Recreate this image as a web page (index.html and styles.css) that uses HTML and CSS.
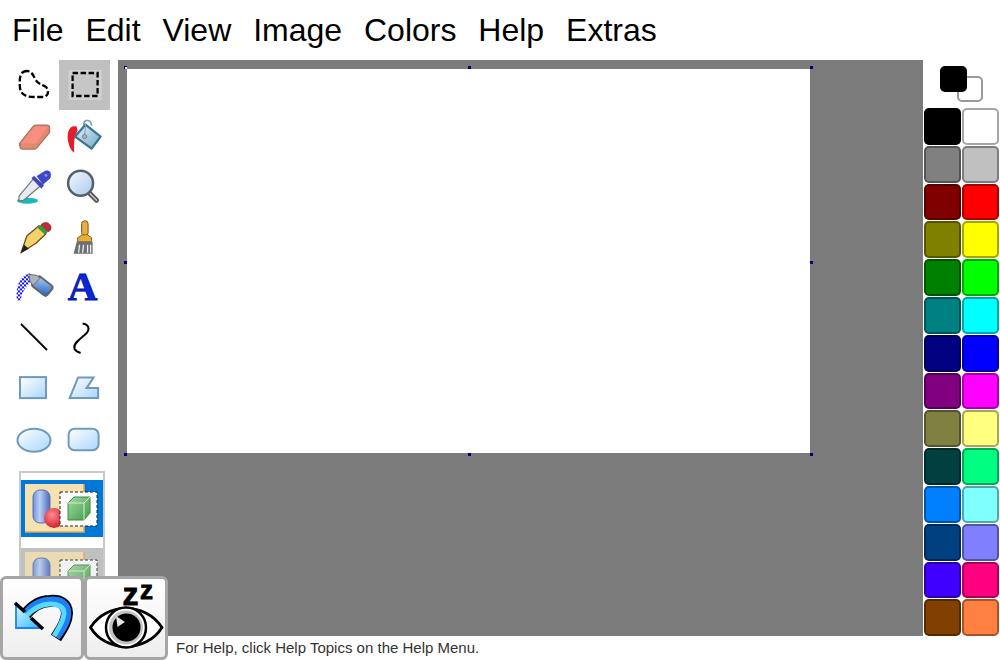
FILE: index.html
```html
<!DOCTYPE html>
<html lang="en">
<head>
    <meta charset="UTF-8">
    <title>Paint</title>
    <link rel="stylesheet" href="styles.css">
</head>
<body>
    <svg class="defs" width="0" height="0">
        <defs>
            <linearGradient id="shape" x1="0" y1="0" x2="1" y2="1">
                <stop offset="0" stop-color="#ffffff"/>
                <stop offset="1" stop-color="#a9d6fb"/>
            </linearGradient>
            <linearGradient id="glass" x1="0" y1="0" x2="1" y2="1">
                <stop offset="0" stop-color="#f4faff"/>
                <stop offset="1" stop-color="#a8c8ec"/>
            </linearGradient>
            <linearGradient id="bucket" x1="0" y1="0" x2="1" y2="1">
                <stop offset="0" stop-color="#e8f3fa"/>
                <stop offset="1" stop-color="#6ea8c8"/>
            </linearGradient>
            <linearGradient id="can" x1="0" y1="0" x2="1" y2="1">
                <stop offset="0" stop-color="#b4d2f4"/>
                <stop offset="1" stop-color="#1f5cc0"/>
            </linearGradient>
            <linearGradient id="undo" x1="0" y1="0" x2="1" y2="1">
                <stop offset="0" stop-color="#d4f8ff"/>
                <stop offset="1" stop-color="#30b8ff"/>
            </linearGradient>
            <linearGradient id="cyl" x1="0" y1="0" x2="1" y2="0">
                <stop offset="0" stop-color="#6f90dc"/>
                <stop offset="0.4" stop-color="#bccff4"/>
                <stop offset="1" stop-color="#4a68bc"/>
            </linearGradient>
            <linearGradient id="cube" x1="0" y1="0" x2="1" y2="1">
                <stop offset="0" stop-color="#a4dca0"/>
                <stop offset="1" stop-color="#3f9a48"/>
            </linearGradient>
            <radialGradient id="ball" cx="0.4" cy="0.35" r="0.7">
                <stop offset="0" stop-color="#ff8c90"/>
                <stop offset="1" stop-color="#d01828"/>
            </radialGradient>
            <pattern id="dots" width="4" height="4" patternUnits="userSpaceOnUse">
                <rect width="2" height="2" fill="#1010f0"/>
                <rect x="2" y="2" width="2" height="2" fill="#1010f0"/>
            </pattern>
            <symbol id="optIcon" viewBox="21 480 82 57">
                <path d="M25 484 L84 484 L84 532 L25 532 Z" fill="#f6e2b0"/>
                <path d="M84 484 L84 532 L25 532" fill="none" stroke="#e8a848" stroke-width="1.500"/>
                <rect x="33" y="490" width="17" height="33" rx="7" fill="url(#cyl)" stroke="#5570b0"/>
                <circle cx="54" cy="518" r="10" fill="url(#ball)"/>
                <rect x="60" y="492" width="37" height="34" fill="#ffffff" stroke="#222" stroke-dasharray="3 2"/>
                <path d="M68 503 L74 497 L90 497 L90 513 L84 520 L68 520 Z" fill="url(#cube)" stroke="#3c8a44"/>
                <path d="M68 503 L84 503 L90 497 M84 503 L84 520" fill="none" stroke="#d6f0d0"/>
            </symbol>
        </defs>
    </svg>

    <nav class="menubar">
        <span class="menu-item">File</span>
        <span class="menu-item">Edit</span>
        <span class="menu-item">View</span>
        <span class="menu-item">Image</span>
        <span class="menu-item">Colors</span>
        <span class="menu-item">Help</span>
        <span class="menu-item">Extras</span>
    </nav>

    <div class="workspace">
        <aside class="toolbox">
            <div class="tools">
                <button class="tool">
                    <svg viewBox="9 60 50.400 50.400"><path d="M27 71 C20 71 19 78 20 88 C21 96 28 97 35 97 L44 97 C49 95 49 90 46 87 C41 84 38 84 35 79 C33 74 31 71 27 71 Z" fill="none" stroke="#000" stroke-width="2.300" stroke-dasharray="6 2.500"/></svg>
                </button>
                <button class="tool selected">
                    <svg viewBox="59.400 60 50.400 50.400"><rect x="69" y="70" width="33" height="30" fill="#d0d0d0"/><rect x="73" y="73" width="25" height="23" fill="#c6c6c6" stroke="#000" stroke-width="2.300" stroke-dasharray="5.500 2.500"/></svg>
                </button>
                <button class="tool">
                    <svg viewBox="9 110.400 50.400 50.400"><path d="M19.500 144 L33 127 Q34 125.500 36 125.500 L47 125.500 Q49.500 125.500 49.500 128 L49.500 133 L37 148 Q36 149.500 34 149.500 L23 149.500 Q20 149.500 20 147 Z" fill="#e08a70" stroke="#a87060" stroke-width="1.300"/><path d="M21 144 L34.500 127 L48 127 L35.500 144 Z" fill="#f88e80"/></svg>
                </button>
                <button class="tool">
                    <svg viewBox="59.400 110.400 50.400 50.400"><path d="M77 127 C69 125 67 134 68.500 142 C69.500 147 72 152 74.500 153 C75 147 73 141 78 131 Z" fill="#e41c2c"/><path d="M84 126 C84 119 91 119 92 126" fill="none" stroke="#7ea4b6" stroke-width="1.800"/><path d="M86 125 L101 137 L92 149 L75.500 137 Z" fill="url(#bucket)" stroke="#3a7690" stroke-width="2.300" stroke-linejoin="round"/><line x1="86" y1="124" x2="85" y2="136" stroke="#8a9aa6"/><circle cx="85" cy="137" r="2.200" fill="#a8aeb4" stroke="#666" stroke-width="0.600"/></svg>
                </button>
                <button class="tool">
                    <svg viewBox="9 160.800 50.400 50.400"><ellipse cx="27.500" cy="200.500" rx="10.500" ry="3" fill="#18b8bc"/><path d="M19 196 L19 200.500 L23 200.500 L40 186 L34 178 Z" fill="#e6eaf2" stroke="#777" stroke-width="1.200" stroke-linejoin="round"/><path d="M31.500 178 L34 175.500 L44 185 L41.500 188.500 Z" fill="#4048b8"/><path d="M37 176 L45 171 Q48.500 170 50 172 Q51.500 175 50 178 L43 184 Z" fill="#3c48cc" stroke="#2c349c" stroke-width="0.600"/><circle cx="46" cy="175" r="1.500" fill="#8a92e8"/></svg>
                </button>
                <button class="tool">
                    <svg viewBox="59.400 160.800 50.400 50.400"><line x1="89" y1="192" x2="97" y2="200" stroke="#555" stroke-width="5" stroke-linecap="round"/><line x1="90" y1="193" x2="97" y2="200" stroke="#c8c8c8" stroke-width="1.500" stroke-linecap="round"/><circle cx="81" cy="183" r="12.500" fill="url(#glass)" stroke="#5a5f66" stroke-width="2.500"/></svg>
                </button>
                <button class="tool">
                    <svg viewBox="9 211.200 50.400 50.400"><path d="M21 253 L27 236 L39 226 L46 234 L36 243.500 Z" fill="#f4d468" stroke="#6d4a1c" stroke-width="1.300" stroke-linejoin="round"/><path d="M21 253 L24 245 L29 249 Z" fill="#222"/><path d="M37 227.500 L45 235 L48 232 L41 225 Z" fill="#3c9a3c"/><path d="M41 225 C44 222 48 222 50 225 C52 228 51 231 48 232 Z" fill="#c02c38" stroke="#6e2024" stroke-width="0.600"/></svg>
                </button>
                <button class="tool">
                    <svg viewBox="59.400 211.200 50.400 50.400"><rect x="82" y="221" width="6.500" height="15" rx="3" fill="#e8b040" stroke="#7a5420"/><path d="M78 242 L78 238 L83 235 L88 235 L92 238 L92 242 Z" fill="#eab034" stroke="#8a6020"/><path d="M77 242 L93 242 L93 254 L74 254 Z" fill="#6c7074"/><path d="M80 245 L79 253 M84 245 L83 253 M88 245 L88 253 M91 245 L91 253" stroke="#f0f0f0" stroke-width="1.300"/></svg>
                </button>
                <button class="tool">
                    <svg viewBox="9 261.600 50.400 50.400"><path d="M31 273 C22 273 15 283 17 300 L21 300 C21 293 26 285 33 280 Z" fill="url(#dots)"/><rect x="33" y="279.500" width="19" height="12.500" rx="3" transform="rotate(38 42.500 285.500)" fill="url(#can)" stroke="#666" stroke-width="2"/><path d="M29 274 L37 275 L40 278 L33 285 L30 281 Z" fill="#b0b4ba" stroke="#666" stroke-width="1"/></svg>
                </button>
                <button class="tool">
                    <svg viewBox="59.400 261.600 50.400 50.400"><text x="83" y="300" text-anchor="middle" class="tool-letter">A</text></svg>
                </button>
                <button class="tool">
                    <svg viewBox="9 312 50.400 50.400"><line x1="21" y1="324" x2="47" y2="350" stroke="#000" stroke-width="1.800"/></svg>
                </button>
                <button class="tool">
                    <svg viewBox="59.400 312 50.400 50.400"><path d="M83 323.500 C91 325 90 331 85 335 C80 339 73 344 75 349 C76 351 78 352 81 353" fill="none" stroke="#000" stroke-width="2"/></svg>
                </button>
                <button class="tool">
                    <svg viewBox="9 362.400 50.400 50.400"><rect x="20" y="377.500" width="26" height="21" fill="url(#shape)" stroke="#6f9abd" stroke-width="2"/></svg>
                </button>
                <button class="tool">
                    <svg viewBox="59.400 362.400 50.400 50.400"><path d="M70 398.500 L78.500 378 L94 378 L87 388.500 L98.500 388.500 L98.500 398.500 Z" fill="url(#shape)" stroke="#6f9abd" stroke-width="2"/></svg>
                </button>
                <button class="tool">
                    <svg viewBox="9 412.800 50.400 50.400"><ellipse cx="34" cy="440" rx="16.500" ry="11.500" fill="url(#shape)" stroke="#6f9abd" stroke-width="2"/></svg>
                </button>
                <button class="tool">
                    <svg viewBox="59.400 412.800 50.400 50.400"><rect x="69" y="428.500" width="30" height="21.500" rx="6" fill="url(#shape)" stroke="#6f9abd" stroke-width="2"/></svg>
                </button>
            </div>
            <div class="tool-options">
                <div class="option active"><svg class="opt-icon"><use href="#optIcon"/></svg></div>
                <div class="option dimmed"><svg class="opt-icon"><use href="#optIcon"/></svg></div>
            </div>
        </aside>

        <main class="canvas-area">
            <div class="canvas-wrap">
                <i class="handle h-tl"></i><i class="handle h-tc"></i><i class="handle h-tr"></i>
                <i class="handle h-ml"></i><i class="handle h-mr"></i>
                <i class="handle h-bl"></i><i class="handle h-bc"></i><i class="handle h-br"></i>
                <div class="canvas"></div>
            </div>
        </main>

        <aside class="colorbox">
            <div class="current-colors">
                <span class="current back"></span>
                <span class="current front"></span>
            </div>
            <div class="palette">
                <span class="swatch" style="background-color:#000000"></span>
                <span class="swatch" style="background-color:#ffffff"></span>
                <span class="swatch" style="background-color:#808080"></span>
                <span class="swatch" style="background-color:#c0c0c0"></span>
                <span class="swatch" style="background-color:#800000"></span>
                <span class="swatch" style="background-color:#ff0000"></span>
                <span class="swatch" style="background-color:#808000"></span>
                <span class="swatch" style="background-color:#ffff00"></span>
                <span class="swatch" style="background-color:#008000"></span>
                <span class="swatch" style="background-color:#00ff00"></span>
                <span class="swatch" style="background-color:#008080"></span>
                <span class="swatch" style="background-color:#00ffff"></span>
                <span class="swatch" style="background-color:#000080"></span>
                <span class="swatch" style="background-color:#0000ff"></span>
                <span class="swatch" style="background-color:#800080"></span>
                <span class="swatch" style="background-color:#ff00ff"></span>
                <span class="swatch" style="background-color:#808040"></span>
                <span class="swatch" style="background-color:#ffff80"></span>
                <span class="swatch" style="background-color:#004040"></span>
                <span class="swatch" style="background-color:#00ff80"></span>
                <span class="swatch" style="background-color:#0080ff"></span>
                <span class="swatch" style="background-color:#80ffff"></span>
                <span class="swatch" style="background-color:#004080"></span>
                <span class="swatch" style="background-color:#8080ff"></span>
                <span class="swatch" style="background-color:#4000ff"></span>
                <span class="swatch" style="background-color:#ff0080"></span>
                <span class="swatch" style="background-color:#804000"></span>
                <span class="swatch" style="background-color:#ff8040"></span>
            </div>
        </aside>
    </div>

    <footer class="statusbar">For Help, click Help Topics on the Help Menu.</footer>

    <div class="float-buttons">
        <button class="big-button">
            <svg viewBox="3 579 78 78">
                <path d="M25 615 C33 605 42 601 50 601 C60 600 67 604 67 613 C67 622 61 630 56 638" fill="none" stroke="#000" stroke-width="12"/>
                <path d="M25 615 C33 605 42 601 50 601 C60 600 67 604 67 613 C67 622 61 630 56 637" fill="none" stroke="#1c80f8" stroke-width="8.500"/>
                <path d="M26 616 C34 608 43 604 50 604 C58 604 64 607 64 613 C64 621 58 629 54 636" fill="none" stroke="#58d8ff" stroke-width="5"/>
                <path d="M16 605 L16 628 L41 628 Z" fill="url(#undo)"/>
                <path d="M16 605 L16 628 L41 628" fill="none" stroke="#1c80f8" stroke-width="1.800"/>
                <path d="M15 603 L25 612 M31 618 L43 629" stroke="#000" stroke-width="3.500"/>
            </svg>
        </button>
        <button class="big-button">
            <svg viewBox="87 579 78 78">
                <text x="122.500" y="605" class="zz">z</text>
                <text x="140" y="598.500" class="zz small">z</text>
                <path d="M90.500 627.500 C106 602 146 602 162 627.500 C146 653 106 653 90.500 627.500 Z" fill="#fff" stroke="#000" stroke-width="2.800"/>
                <circle cx="126" cy="627.500" r="20" fill="#fff" stroke="#000" stroke-width="2.500"/>
                <circle cx="126" cy="627.500" r="17" fill="#c4c4c4"/>
                <circle cx="126.500" cy="627.500" r="14" fill="#000"/>
                <path d="M116 616 L125 622 L117.500 627 Z" fill="#e4e4e4"/>
            </svg>
        </button>
    </div>
</body>
</html>
```

FILE: styles.css
```css
html, body {
    height: 100%;
}
body {
    margin: 0;
    display: flex;
    flex-direction: column;
    position: relative;
    overflow: hidden;
    background-color: #fff;
    font-family: "Liberation Sans", Arial, sans-serif;
    color: #000;
}
.defs {
    position: absolute;
}

.menubar {
    height: 60px;
    flex: none;
    display: flex;
    align-items: center;
    gap: 21.9px;
    padding-left: 12px;
    font-size: 32px;
}

.workspace {
    flex: 1;
    min-height: 0;
    display: flex;
}

.toolbox {
    width: 118px;
    flex: none;
    overflow: hidden;
}
.tools {
    display: grid;
    grid-template-columns: repeat(2, 50.4px);
    grid-auto-rows: 50.4px;
    padding-left: 9px;
}
.tool {
    padding: 0;
    border: none;
    background: none;
}
.tool svg {
    display: block;
    width: 50.4px;
    height: 50.4px;
}
.tool.selected {
    background-color: #c0c0c0;
}
.tool-letter {
    font-family: "Liberation Serif", serif;
    font-weight: bold;
    font-size: 41px;
    fill: #0a26d8;
    stroke: #06129c;
    stroke-width: 0.8px;
}

.tool-options {
    width: 82px;
    margin: 8px 0 0 19px;
    padding-top: 7px;
    border: 2px solid #c8c8c8;
    border-bottom: none;
}
.option {
    height: 57px;
    margin-bottom: 11px;
}
.option.active {
    background-color: #0078d7;
}
.option.dimmed {
    background-color: #c0c0c0;
}
.option.dimmed .opt-icon {
    opacity: 0.8;
}
.opt-icon {
    display: block;
    width: 82px;
    height: 57px;
}

.canvas-area {
    flex: 1;
    padding: 9px;
    background-color: #7b7b7b;
}
.canvas-wrap {
    position: relative;
    width: 683px;
    height: 384px;
}
.canvas {
    width: 100%;
    height: 100%;
    background-color: #fff;
}
.handle {
    position: absolute;
    width: 3px;
    height: 3px;
    background-color: #000080;
}
.h-tl, .h-tc, .h-tr { top: -3px; }
.h-ml, .h-mr { top: 192px; }
.h-bl, .h-bc, .h-br { top: 384px; }
.h-tl, .h-ml, .h-bl { left: -3px; }
.h-tc, .h-bc { left: 341px; }
.h-tr, .h-mr, .h-br { left: 683px; }
.h-tl {
    box-sizing: border-box;
    background-color: #fff;
    border-top: 1px solid #000080;
    border-left: 1px solid #000080;
}

.colorbox {
    width: 77px;
    flex: none;
    display: flex;
    flex-direction: column;
}
.current-colors {
    height: 48px;
    flex: none;
    position: relative;
}
.current {
    position: absolute;
    box-sizing: border-box;
    border-radius: 5px;
}
.current.front {
    left: 17px;
    top: 6px;
    width: 27px;
    height: 26px;
    background-color: #000;
}
.current.back {
    left: 34px;
    top: 16px;
    width: 26px;
    height: 26px;
    background-color: #fff;
    border: 2px solid #999;
}
.palette {
    flex: 1;
    display: grid;
    grid-template-columns: repeat(2, 37px);
    grid-auto-rows: 36.8px;
    gap: 1px;
    padding-left: 1px;
}
.swatch {
    box-sizing: border-box;
    border: 2px solid rgba(0, 0, 0, 0.35);
    border-radius: 5px;
}

.statusbar {
    height: 22px;
    padding-bottom: 2px;
    flex: none;
    display: flex;
    align-items: center;
    padding-left: 176px;
    font-size: 15px;
    color: #333;
}

.float-buttons {
    position: absolute;
    left: 0;
    bottom: 0;
    display: flex;
}
.big-button {
    box-sizing: border-box;
    width: 84px;
    height: 84px;
    padding: 0;
    border: 3px solid #a6a6a6;
    border-radius: 6px;
    background: linear-gradient(#ffffff, #eeeeee);
}
.big-button svg {
    display: block;
    width: 78px;
    height: 78px;
    overflow: visible;
}
.zz {
    font-family: "Liberation Sans", sans-serif;
    font-weight: bold;
    font-size: 32px;
    stroke: #000;
    stroke-width: 0.8px;
}
.zz.small {
    font-size: 26px;
}
```
